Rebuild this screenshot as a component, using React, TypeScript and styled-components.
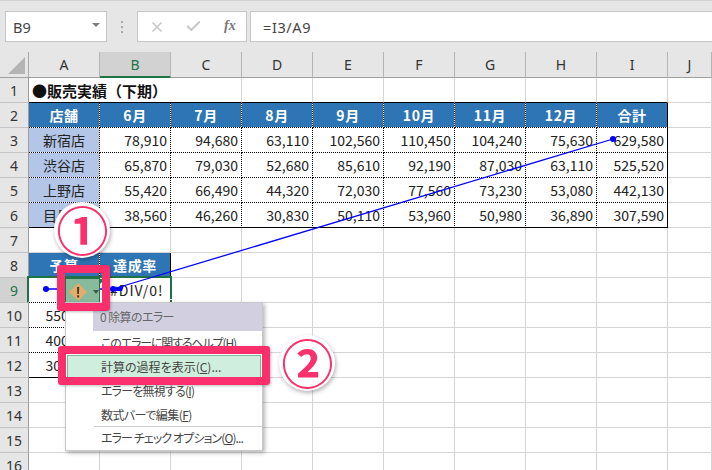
import React from "react";
import styled, { createGlobalStyle } from "styled-components";
import { X, Check } from "lucide-react";

const font = `"Noto Sans CJK JP", "Noto Sans", sans-serif`;
const green = "#217346";
const pink = "#fb2f6b";

const Global = createGlobalStyle`
  html, body { margin: 0; padding: 0; background: #fff; overflow: hidden; }
  * { box-sizing: border-box; }
`;

const Page = styled.div`
  position: relative;
  width: 712px;
  height: 470px;
  overflow: hidden;
  font-family: ${font};
  background: #fff;
`;

const FormulaBar = styled.div`
  height: 52px;
  background: #e6e6e6;
  border-top: 1px solid #d2d2d2;
  padding: 10px 0 10px 5px;
  display: flex;
  align-items: stretch;
`;

const NameBox = styled.div`
  width: 102px;
  background: #fff;
  border: 1px solid #c6c6c6;
  padding: 0 6px 0 7px;
  display: flex;
  align-items: center;
  justify-content: space-between;
  font: 14.5px "Noto Sans", sans-serif;
  color: #444;
`;

const DropArrow = styled.span`
  width: 0;
  height: 0;
  border-left: 4px solid transparent;
  border-right: 4px solid transparent;
  border-top: 4px solid #7a7a7a;
  margin-top: -3px;
`;

const Grip = styled.div`
  width: 30px;
  display: flex;
  flex-direction: column;
  align-items: center;
  justify-content: center;
  gap: 3px;
`;

const GripDot = styled.span`
  width: 2px;
  height: 2px;
  background: #a8a8a8;
`;

const FnBox = styled.div`
  width: 110px;
  background: #fff;
  border: 1px solid #c6c6c6;
  display: flex;
  align-items: center;
  padding-left: 11px;
  color: #c8c8c8;
`;

const FxLabel = styled.span`
  font: italic bold 14px "Liberation Serif", serif;
  color: #777;
  margin-left: 22px;
  margin-top: -2px;
`;

const CheckWrap = styled.span`
  display: flex;
  margin-left: 20px;
`;

const Formula = styled.div`
  flex: 1;
  margin-left: 3px;
  background: #fff;
  border: 1px solid #c6c6c6;
  border-right: 0;
  padding-left: 12px;
  display: flex;
  align-items: center;
  font: 14.5px "Noto Sans", sans-serif;
  letter-spacing: 0.6px;
  color: #444;
`;

const Sheet = styled.div`
  display: grid;
  grid-template-columns: 29px repeat(9, 71px) 1fr;
  grid-template-rows: 26px;
  grid-auto-rows: 25px;
  background: #fff;
`;

const Corner = styled.div`
  background: #e6e6e6;
  border-right: 1px solid #a8a8a8;
  border-bottom: 1px solid #a0a0a0;
  display: flex;
  align-items: flex-end;
  justify-content: flex-end;
  padding: 0 3px 3px 0;
`;

const ColHead = styled.div<{ $on?: boolean }>`
  background: ${(p) => (p.$on ? "#d2d2d2" : "#e6e6e6")};
  border-right: 1px solid #b4b4b4;
  border-bottom: ${(p) => (p.$on ? `2px solid ${green}` : "1px solid #a0a0a0")};
  color: ${(p) => (p.$on ? green : "#333")};
  font: 14px "Noto Sans", sans-serif;
  display: flex;
  align-items: center;
  justify-content: center;
`;

const RowHead = styled.div<{ $on?: boolean }>`
  background: ${(p) => (p.$on ? "#d2d2d2" : "#e6e6e6")};
  border-right: 1px solid #9c9c9c;
  border-bottom: 1px solid #c4c4c4;
  color: ${(p) => (p.$on ? green : "#333")};
  font: 14px "Noto Sans", sans-serif;
  display: flex;
  align-items: center;
  justify-content: center;
`;

type Line = "grid" | "dot" | "solid";
const lineCss = (l: Line) =>
  l === "grid" ? "1px solid #d4d4d4" : l === "dot" ? "1px dotted #000" : "1px solid #000";

const Cell = styled.div<{ $right: Line; $bottom: Line; $fill?: string; $align?: string; $color?: string; $bold?: boolean; $pad?: number; $track?: number }>`
  border-right: ${(p) => lineCss(p.$right)};
  border-bottom: ${(p) => lineCss(p.$bottom)};
  background: ${(p) => p.$fill ?? "#fff"};
  background-clip: padding-box;
  color: ${(p) => p.$color ?? "#222"};
  font-size: 14px;
  font-weight: ${(p) => (p.$bold ? 700 : 400)};
  letter-spacing: ${(p) => p.$track ?? (p.$bold ? 0.6 : 0)}px;
  display: flex;
  align-items: center;
  justify-content: ${(p) => p.$align ?? "flex-end"};
  padding: 0 3px 0 ${(p) => p.$pad ?? 3}px;
  white-space: nowrap;
  overflow: hidden;
`;

const TitleCell = styled.div`
  grid-column: span 3;
  border-right: 1px solid #d4d4d4;
  border-bottom: 1px solid #000;
  padding-left: 3px;
  display: flex;
  align-items: center;
  font-size: 15px;
  font-weight: 700;
  color: #111;
  white-space: nowrap;
`;

const Selection = styled.div`
  position: absolute;
  left: 27px;
  top: 276px;
  width: 145px;
  height: 27px;
  border: 2px solid ${green};
  border-bottom-color: transparent;
`;

const Handle = styled.div`
  position: absolute;
  left: 169px;
  top: 299px;
  width: 4px;
  height: 4px;
  background: ${green};
  border: 1px solid #fff;
`;

const Tracer = styled.svg`
  position: absolute;
  left: 0;
  top: 0;
`;

const ErrorMark = styled.div`
  position: absolute;
  left: 100px;
  top: 279px;
  width: 0;
  height: 0;
  border-top: 5px solid ${green};
  border-right: 5px solid transparent;
`;

const SmartTag = styled.div`
  position: absolute;
  left: 65px;
  top: 278px;
  width: 35px;
  height: 27px;
  background: #87bb9c;
  border: 1px solid ${green};
  display: flex;
  align-items: center;
  padding-left: 2px;
`;

const TagArrow = styled.span`
  width: 0;
  height: 0;
  margin-left: 5px;
  border-left: 3.5px solid transparent;
  border-right: 3.5px solid transparent;
  border-top: 4px solid #3f5a49;
`;

const Menu = styled.div`
  position: absolute;
  left: 65px;
  top: 302px;
  width: 198px;
  height: 149px;
  background: #fff;
  border: 1px solid #c8c8c8;
  box-shadow: 2px 2px 4px rgba(0, 0, 0, 0.28);
  display: flex;
  flex-direction: column;
  color: #444;
  font-size: 12px;
  font-feature-settings: "palt";
`;

const MenuTitle = styled.div`
  height: 28px;
  margin-left: 27px;
  background: #d2d0e0;
  color: #666;
  padding: 0 0 1px 7px;
  display: flex;
  align-items: center;
  letter-spacing: -0.6px;
`;

const MenuItem = styled.div<{ $on?: boolean; $h?: number; $track?: number }>`
  height: ${(p) => p.$h ?? 24}px;
  margin: 0 1px;
  padding: 0 0 1px 33px;
  display: flex;
  align-items: center;
  white-space: pre;
  letter-spacing: ${(p) => p.$track ?? 0}px;
  background: ${(p) => (p.$on ? "#d0eedd" : "transparent")};
  border: 1px solid ${(p) => (p.$on ? "#7fb897" : "transparent")};
  & u { text-underline-offset: 1px; }
`;

const MenuSep = styled.div`
  height: 1px;
  margin-left: 28px;
  background: #d0d0d0;
`;

const Callout = styled.div<{ $l: number; $t: number; $w: number; $h: number }>`
  position: absolute;
  left: ${(p) => p.$l}px;
  top: ${(p) => p.$t}px;
  width: ${(p) => p.$w}px;
  height: ${(p) => p.$h}px;
  border: 8px solid ${pink};
  border-radius: 3px;
  box-shadow: 1px 1px 3px rgba(0, 0, 0, 0.25);
`;

const Badge = styled.div<{ $l: number; $t: number }>`
  position: absolute;
  left: ${(p) => p.$l}px;
  top: ${(p) => p.$t}px;
  width: 56px;
  height: 56px;
  padding: 0 0 3px 1px;
  border-radius: 50%;
  background: #fff;
  box-shadow: 1px 2px 4px rgba(0, 0, 0, 0.3);
  display: flex;
  align-items: center;
  justify-content: center;
  color: ${pink};
  font: 700 52px/56px "Noto Sans CJK JP", sans-serif;
`;

const months = ["6月", "7月", "8月", "9月", "10月", "11月", "12月", "合計"];
const rows: [string, string[]][] = [
  ["新宿店", ["78,910", "94,680", "63,110", "102,560", "110,450", "104,240", "75,630", "629,580"]],
  ["渋谷店", ["65,870", "79,030", "52,680", "85,610", "92,190", "87,030", "63,110", "525,520"]],
  ["上野店", ["55,420", "66,490", "44,320", "72,030", "77,560", "73,230", "53,080", "442,130"]],
  ["目黒店", ["38,560", "46,260", "30,830", "50,110", "53,960", "50,980", "36,890", "307,590"]],
];
const COLS = ["A", "B", "C", "D", "E", "F", "G", "H", "I", "J"];
const BLUE = "#2e75b6";

function Blank({ n }: { n: number }) {
  return (
    <>
      {Array.from({ length: n }, (_, i) => (
        <Cell key={i} $right="grid" $bottom="grid" />
      ))}
    </>
  );
}

export default function App() {
  return (
    <Page>
      <Global />
      <FormulaBar>
        <NameBox>
          B9
          <DropArrow />
        </NameBox>
        <Grip>
          <GripDot />
          <GripDot />
          <GripDot />
        </Grip>
        <FnBox>
          <X size={16} strokeWidth={2.6} />
          <CheckWrap>
            <Check size={17} strokeWidth={3} />
          </CheckWrap>
          <FxLabel>fx</FxLabel>
        </FnBox>
        <Formula>=I3/A9</Formula>
      </FormulaBar>

      <Sheet>
        <Corner>
          <svg width="17" height="17" viewBox="0 0 17 17">
            <path d="M17 0V17H0Z" fill="#b4b4b4" />
          </svg>
        </Corner>
        {COLS.map((c) => (
          <ColHead key={c} $on={c === "B"}>
            {c}
          </ColHead>
        ))}

        <RowHead>1</RowHead>
        <TitleCell>●販売実績（下期）</TitleCell>
        {Array.from({ length: 6 }, (_, i) => (
          <Cell key={i} $right="grid" $bottom="solid" />
        ))}
        <Blank n={1} />

        <RowHead>2</RowHead>
        <Cell $right="dot" $bottom="dot" $fill={BLUE} $align="center" $color="#fff" $bold>
          店舗
        </Cell>
        {months.map((m, i) => (
          <Cell key={m} $right={i === 7 ? "solid" : "dot"} $bottom="dot" $fill={BLUE} $align="center" $color="#fff" $bold>
            {m}
          </Cell>
        ))}
        <Blank n={1} />

        {rows.map(([shop, vals], r) => {
          const bottom: Line = r === 3 ? "solid" : "dot";
          return (
            <React.Fragment key={shop}>
              <RowHead>{r + 3}</RowHead>
              <Cell $right="dot" $bottom={bottom} $fill="#b4c6e7" $align="center">
                {shop}
              </Cell>
              {vals.map((v, i) => (
                <Cell key={i} $right={i === 7 ? "solid" : "dot"} $bottom={bottom}>
                  {v}
                </Cell>
              ))}
              <Blank n={1} />
            </React.Fragment>
          );
        })}

        <RowHead>7</RowHead>
        <Blank n={10} />

        <RowHead>8</RowHead>
        <Cell $right="dot" $bottom="dot" $fill={BLUE} $align="center" $color="#fff" $bold>
          予算
        </Cell>
        <Cell $right="solid" $bottom="dot" $fill={BLUE} $align="center" $color="#fff" $bold>
          達成率
        </Cell>
        <Blank n={8} />

        <RowHead $on>9</RowHead>
        <Cell $right="dot" $bottom="dot" />
        <Cell $right="solid" $bottom="dot" $align="flex-start" $pad={10} $track={1}>
          #DIV/0!
        </Cell>
        <Blank n={8} />

        {["550,000", "400,000", "300,000"].map((v, i) => (
          <React.Fragment key={v}>
            <RowHead>{10 + i}</RowHead>
            <Cell $right="dot" $bottom={i === 2 ? "solid" : "dot"}>
              {v}
            </Cell>
            <Cell $right="grid" $bottom={i === 2 ? "solid" : "grid"} />
            <Blank n={8} />
          </React.Fragment>
        ))}

        {[13, 14, 15, 16].map((n) => (
          <React.Fragment key={n}>
            <RowHead>{n}</RowHead>
            <Blank n={10} />
          </React.Fragment>
        ))}
      </Sheet>

      <Selection />
      <Handle />
      <ErrorMark />

      <Tracer width="712" height="470" viewBox="0 0 712 470">
        <path d="M46 289H113M113 289L613 139" stroke="#0000ff" strokeWidth="1.3" fill="none" />
        <circle cx="46" cy="289" r="3" fill="#0000ff" />
        <circle cx="613" cy="139" r="3" fill="#0000ff" />
        <circle cx="113" cy="289" r="3" fill="#0000ff" />
        <path d="M124 285.5L112 288.5L112 291L122 291Z" fill="#0000ff" />
      </Tracer>

      <SmartTag>
        <svg width="20" height="20" viewBox="0 0 20 20">
          <path d="M10 1L19 10L10 19L1 10Z" fill="#e2ac6c" />
          <path d="M9 5h2.2l-.3 7H9.3ZM9.1 13.3h2v2.2h-2Z" fill="#40392c" />
        </svg>
        <TagArrow />
      </SmartTag>

      <Menu>
        <MenuTitle>0 除算のエラー</MenuTitle>
        <MenuItem $track={-1.15}>
          このエラーに関するヘルプ(<u>H</u>)
        </MenuItem>
        <MenuItem $on>
          計算の過程を表示(<u>C</u>)...
        </MenuItem>
        <MenuItem $track={-0.8}>
          エラーを無視する(<u>I</u>)
        </MenuItem>
        <MenuItem $h={23} $track={-0.55}>
          数式バーで編集(<u>F</u>)
        </MenuItem>
        <MenuSep />
        <MenuItem $h={22} $track={-0.9}>
          エラー チェック オプション(<u>O</u>)...
        </MenuItem>
      </Menu>

      <Callout $l={57} $t={265} $w={53} $h={46} />
      <Callout $l={58} $t={346} $w={212} $h={39} />
      <Badge $l={54} $t={202}>①</Badge>
      <Badge $l={279} $t={335}>②</Badge>
    </Page>
  );
}
